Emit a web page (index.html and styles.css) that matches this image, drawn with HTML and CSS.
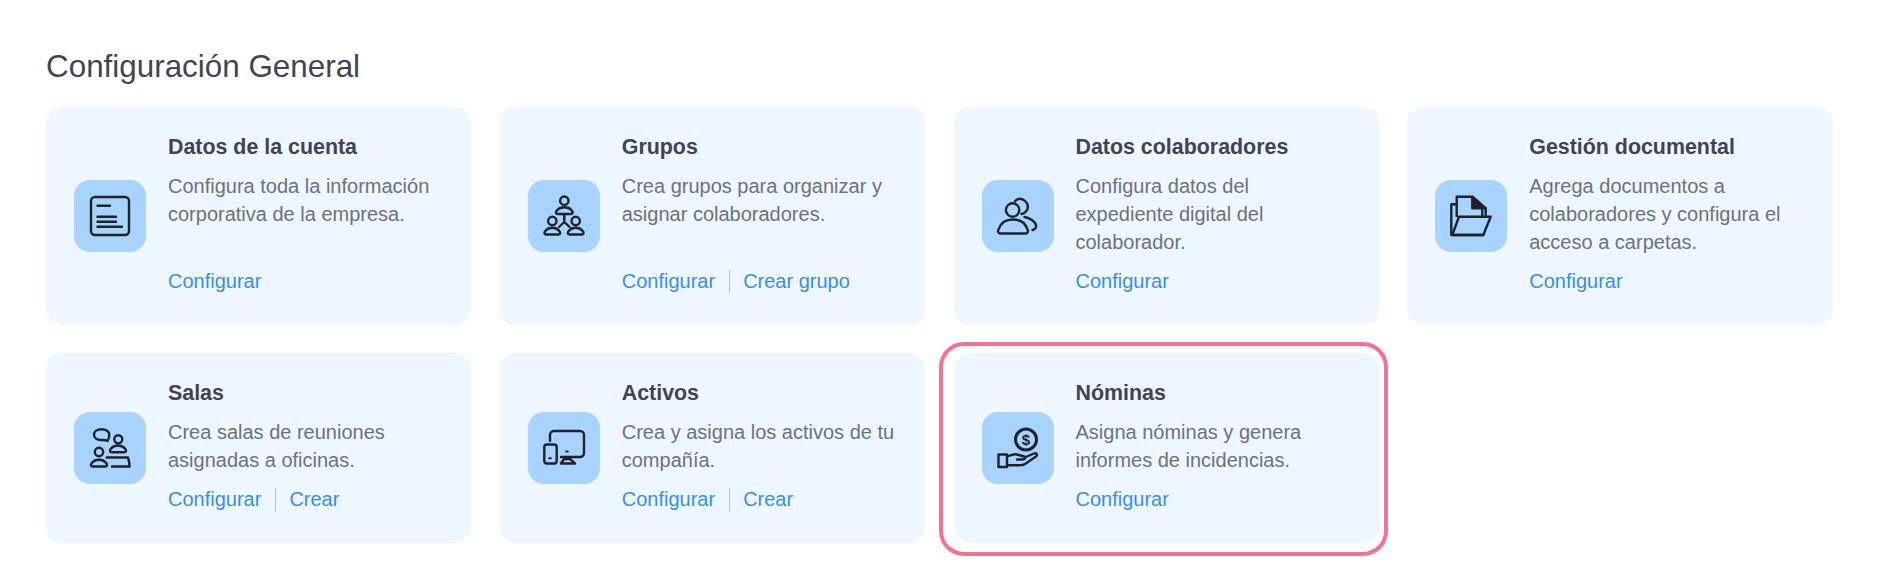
FILE: index.html
```html
<!DOCTYPE html>
<html lang="es">
<head>
    <meta charset="UTF-8">
    <meta name="viewport" content="width=device-width, initial-scale=1.0">
    <title>Configuración General</title>
    <link rel="stylesheet" href="styles.css">
</head>
<body>
    <h1 class="page-title">Configuración General</h1>
    <div class="card-grid">
        <div class="card">
            <div class="card-icon">
                <svg viewBox="0 0 48 48">
                    <rect x="5" y="5" width="38" height="38" rx="4"/>
                    <path d="M11.5 13.7H24M11.5 24.7H30M11.5 29.7H30M11.5 34.7H36"/>
                </svg>
            </div>
            <div class="card-body">
                <h3>Datos de la cuenta</h3>
                <p>Configura toda la información corporativa de la empresa.</p>
                <div class="card-links"><a href="#">Configurar</a></div>
            </div>
        </div>
        <div class="card">
            <div class="card-icon">
                <svg viewBox="0 0 48 48">
                    <circle cx="24.3" cy="8.7" r="4.2"/>
                    <path d="M17.5 22C15.5 22 15.5 19.8 17 18.3C18.6 16.3 21 15.3 24.3 15.3C27.6 15.3 30 16.3 31.6 18.3C33.1 19.8 33.1 22 31.1 22Z"/>
                    <circle cx="12.3" cy="29" r="4.2"/>
                    <path d="M6 42.5C4 42.5 4 40.3 5.5 38.8C7.1 36.8 9.3 35.8 12.3 35.8C15.3 35.8 17.5 36.8 19.1 38.8C20.6 40.3 20.6 42.5 18.6 42.5Z"/>
                    <circle cx="35.7" cy="29" r="4.2"/>
                    <path d="M29.4 42.5C27.4 42.5 27.4 40.3 28.9 38.8C30.5 36.8 32.7 35.8 35.7 35.8C38.7 35.8 40.9 36.8 42.5 38.8C44 40.3 44 42.5 42 42.5Z"/>
                    <path d="M24.3 23V30M24.3 30L19 35M24.3 30L29.6 35"/>
                </svg>
            </div>
            <div class="card-body">
                <h3>Grupos</h3>
                <p>Crea grupos para organizar y asignar colaboradores.</p>
                <div class="card-links"><a href="#">Configurar</a><span class="sep"></span><a href="#">Crear grupo</a></div>
            </div>
        </div>
        <div class="card">
            <div class="card-icon">
                <svg viewBox="0 0 48 48">
                    <circle cx="18.6" cy="18" r="6.7"/>
                    <path d="M6.5 41.5H31.5C33.8 41.5 34.5 39.6 33.5 37.5C31.5 31 26 27.5 19 27.5C12 27.5 6.5 31 4.5 37.5C3.5 39.6 4.2 41.5 6.5 41.5Z"/>
                    <path d="M21 9.2C23 6.8 26 6.4 28.5 7.3C33 9 35 14 33 18C32 20 30 21.5 27.5 22"/>
                    <path d="M30.5 25C36 26 41 29.5 42 33C42.6 35.2 41.5 37.5 38.5 38"/>
                </svg>
            </div>
            <div class="card-body">
                <h3>Datos colaboradores</h3>
                <p>Configura datos del expediente digital del colaborador.</p>
                <div class="card-links"><a href="#">Configurar</a></div>
            </div>
        </div>
        <div class="card">
            <div class="card-icon">
                <svg viewBox="0 0 48 48">
                    <path d="M9.7 24V4.7H25.3L38.7 16.3V23"/>
                    <path class="solid" d="M25.3 4.7V16.3H38.7Z"/>
                    <path d="M9.7 12.3H4.3V43H36.3"/>
                    <path d="M12 24.7H43.7L36.3 43H5.3Z"/>
                    <path d="M35.3 16.3V23"/>
                </svg>
            </div>
            <div class="card-body">
                <h3>Gestión documental</h3>
                <p>Agrega documentos a colaboradores y configura el acceso a carpetas.</p>
                <div class="card-links"><a href="#">Configurar</a></div>
            </div>
        </div>
        <div class="card">
            <div class="card-icon">
                <svg viewBox="0 0 48 48">
                    <path d="M15.5 5.2C11 5.2 8 7.5 8 10.5C8 13.8 11 16 15 16C17 16 19 15.6 21.5 17C22.8 15 23.3 13 23.3 10.5C23.3 7.5 20 5.2 15.5 5.2Z"/>
                    <circle cx="32.3" cy="15.2" r="4"/>
                    <path d="M25.5 28.2C23.5 28.2 23.5 26.2 25 24.6C26.6 22.5 29 21.5 32 21.5C35 21.5 37.4 22.5 39 24.6C40.5 26.2 40.5 28.2 38.5 28.2Z"/>
                    <circle cx="13" cy="28" r="4.2"/>
                    <path d="M6.5 42.5C4.5 42.5 4.5 40.3 6 38.8C7.6 36.8 10 35.8 13 35.8C16 35.8 18.4 36.8 20 38.8C21.5 40.3 21.5 42.5 19.5 42.5Z"/>
                    <path d="M20.7 33.5H42C43 36.5 43.5 39.5 43.5 42.5H26"/>
                </svg>
            </div>
            <div class="card-body">
                <h3>Salas</h3>
                <p>Crea salas de reuniones asignadas a oficinas.</p>
                <div class="card-links"><a href="#">Configurar</a><span class="sep"></span><a href="#">Crear</a></div>
            </div>
        </div>
        <div class="card">
            <div class="card-icon">
                <svg viewBox="0 0 48 48">
                    <path d="M10 17V11A4 4 0 0 1 14 7H40A4 4 0 0 1 44 11V29A4 4 0 0 1 40 33H21"/>
                    <rect x="4.3" y="20.5" width="12.4" height="19" rx="2.5"/>
                    <path d="M27 33V35M24 35H30L35 39.5H21Z"/>
                    <path class="thin" d="M9.2 34.2H10.8M26.2 27.5H27.8"/>
                </svg>
            </div>
            <div class="card-body">
                <h3>Activos</h3>
                <p>Crea y asigna los activos de tu compañía.</p>
                <div class="card-links"><a href="#">Configurar</a><span class="sep"></span><a href="#">Crear</a></div>
            </div>
        </div>
        <div class="card card-marked">
            <div class="card-icon">
                <svg viewBox="0 0 48 48">
                    <circle class="coin-ring" cx="32" cy="15.5" r="10.5"/>
                    <text class="coin" x="32" y="20.8" text-anchor="middle">$</text>
                    <rect x="4.5" y="30.5" width="8.5" height="12.5"/>
                    <path d="M13 32.5C17 31 20 29.5 23 30.5L30 32.5C32 33.2 31.5 35.5 29 35.5H23"/>
                    <path d="M30.5 33.5L40 29.5C42.5 28.5 44 31 42 32.5L31 40C29.5 41 28 41.3 26 41.3H13"/>
                </svg>
            </div>
            <div class="card-body">
                <h3>Nóminas</h3>
                <p>Asigna nóminas y genera informes de incidencias.</p>
                <div class="card-links"><a href="#">Configurar</a></div>
            </div>
        </div>
    </div>
</body>
</html>
```

FILE: styles.css
```css
body {
    margin: 0;
    padding: 49px 51.5px 24px 46px;
    font-family: "Liberation Sans", Arial, sans-serif;
    background-color: #fff;
}
.page-title {
    margin: 0 0 22px;
    font-size: 31.4px;
    font-weight: 400;
    line-height: 36px;
    color: #3f4652;
}
.card-grid {
    display: grid;
    grid-template-columns: repeat(4, 1fr);
    gap: 28px 28.5px;
}
.card {
    position: relative;
    display: flex;
    align-items: center;
    gap: 22px;
    padding: 28px 28px 32px;
    background: #eef6ff;
    border-radius: 16px;
}
.card-marked::after {
    content: "";
    position: absolute;
    inset: -11px -9px -13px -15px;
    border: 4.5px solid #f5718f;
    border-radius: 25px;
}
.card-icon {
    flex: none;
    display: flex;
    align-items: center;
    justify-content: center;
    width: 72px;
    height: 72px;
    margin-top: 4px;
    background: #a8d3ff;
    border-radius: 16px;
}
.card-icon svg {
    width: 48px;
    height: 48px;
    fill: none;
    stroke: #1f2329;
    stroke-width: 2.4;
    stroke-linecap: round;
    stroke-linejoin: round;
}
.card-icon .solid {
    fill: #1f2329;
}
.card-icon .thin {
    stroke-width: 2;
}
.card-icon .coin-ring {
    stroke-width: 3;
}
.card-icon .coin {
    fill: #1f2329;
    stroke: none;
    font-size: 15px;
    font-weight: 700;
    font-family: "Liberation Sans", sans-serif;
}
.card-body {
    flex: 1;
    display: flex;
    flex-direction: column;
    align-self: stretch;
}
.card-body h3 {
    margin: 1px 0 14px;
    font-size: 21.4px;
    line-height: 22px;
    font-weight: 700;
    color: #3f4450;
}
.card-body p {
    margin: 0 0 13px;
    font-size: 20px;
    line-height: 28px;
    color: #6f7277;
}
.card-links {
    display: flex;
    align-items: center;
    margin-top: auto;
    font-size: 20px;
    line-height: 24px;
}
.card-links a {
    color: #3a8fe3;
    text-decoration: none;
}
.sep {
    width: 1px;
    height: 23px;
    margin: 0 13.5px;
    background: #b9c2cc;
}
```
